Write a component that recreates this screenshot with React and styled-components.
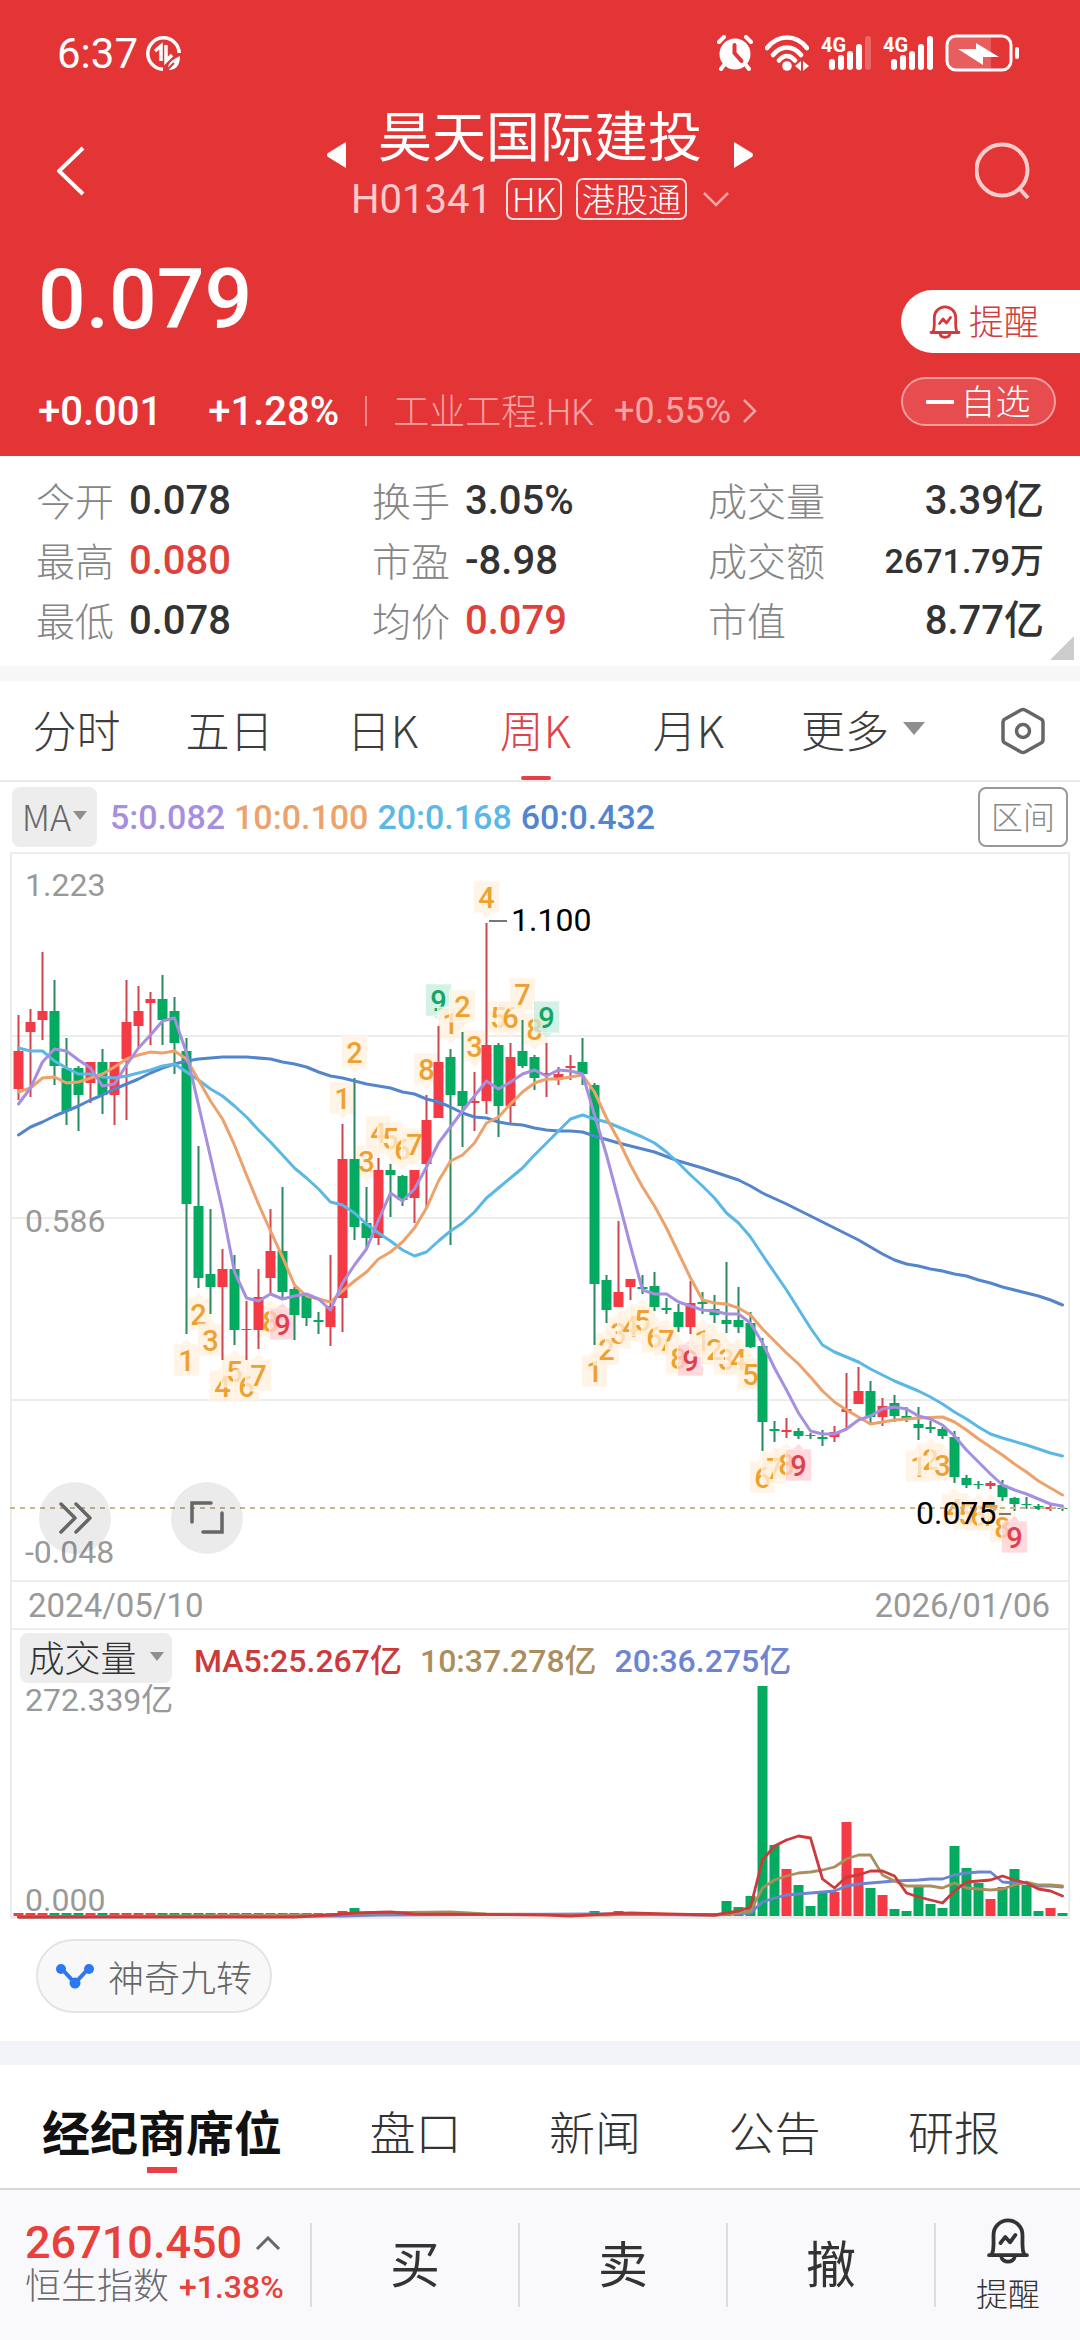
import React, { useState } from "react";
import styled, { createGlobalStyle } from "styled-components";

const RED = "#e33536";
const UP = "#f43a44";
const DOWN = "#03aa5f";
const CJK = `"Noto Sans CJK SC", sans-serif`;
const NUM = `Roboto, "Noto Sans CJK SC", sans-serif`;

const GlobalStyle = createGlobalStyle`
  * {
    box-sizing: border-box;
  }
  body {
    margin: 0;
    background: #fff;
    color: #333;
    font-family: ${CJK};
    font-weight: 300;
  }
  button {
    margin: 0;
    padding: 0;
    border: 0;
    background: none;
    color: inherit;
    font-family: inherit;
    font-weight: inherit;
    cursor: pointer;
  }
  a {
    color: inherit;
    text-decoration: none;
  }
  svg {
    display: block;
    flex: none;
  }
`;

/* ---------------------------- header ---------------------------- */
const Header = styled.header`
  background: ${RED};
  color: #fff;
`;
const StatusBar = styled.div`
  display: flex;
  justify-content: space-between;
  align-items: center;
  height: 106px;
  padding: 0 61px 0 57px;
  font-family: ${NUM};
  font-size: 42px;
  font-weight: 400;
`;
const StatusGroup = styled.div`
  display: flex;
  align-items: center;
  gap: ${(p) => p.$gap}px;
`;
const NavBar = styled.nav`
  display: grid;
  grid-template-columns: 1fr auto 1fr;
  align-items: center;
  height: 130px;
  padding: 0 49px;
`;
const IconButton = styled.button`
  justify-self: ${(p) => p.$side};
  margin: 0 ${(p) => p.$inset || 0}px;
`;
const TitleBox = styled.div`
  display: flex;
  flex-direction: column;
  align-items: center;
  gap: 8px;
  height: 130px;
`;
const TitleRow = styled.div`
  display: flex;
  align-items: flex-end;
  gap: 32px;
  h1 {
    margin: 0;
    padding-bottom: 8px;
    font-size: 54px;
    line-height: 56px;
    font-weight: 400;
  }
`;
const CodeRow = styled.div`
  display: flex;
  align-items: center;
  gap: 14px;
  height: 42px;
  font-size: 40px;
`;
const Code = styled.span`
  font-family: ${NUM};
  font-weight: 400;
  color: #fbc9c9;
`;
const Tag = styled.span`
  height: 42px;
  padding: 0 4px;
  border: 2px solid #fbdcdc;
  border-radius: 7px;
  font-size: 33px;
  line-height: 36px;
`;
const Quote = styled.section`
  display: flex;
  justify-content: space-between;
  padding: 22px 0 20px 38px;
`;
const Price = styled.div`
  font-family: ${NUM};
  font-size: 84px;
  font-weight: 500;
  line-height: 84px;
`;
const ChangeRow = styled.div`
  display: flex;
  align-items: center;
  height: 50px;
  margin-top: 44px;
  font-family: ${NUM};
  font-size: 40px;
  font-weight: 500;
  gap: 26px;
`;
const Changes = styled.div`
  display: flex;
  gap: 46px;
`;
const Split = styled.i`
  width: 2px;
  height: 30px;
  background: #f08686;
`;
const Industry = styled.a`
  display: flex;
  align-items: center;
  gap: 12px;
  color: #f5a3a3;
  font-size: 36px;
  font-weight: 400;
`;
const IndustryName = styled.span`
  padding: 0 8px 4px 0;
  font-weight: 300;
`;
const QuoteActions = styled.div`
  display: flex;
  flex-direction: column;
  align-items: flex-end;
  gap: 24px;
  padding-top: 32px;
`;
const RemindPill = styled.button`
  display: flex;
  align-items: center;
  gap: 8px;
  width: 179px;
  height: 63px;
  padding-left: 28px;
  border-radius: 32px 0 0 32px;
  background: #fff;
  color: #d23a3d;
  font-size: 35px;
  line-height: 40px;
  span {
    padding-bottom: 4px;
  }
`;
const WatchPill = styled.button`
  display: flex;
  align-items: center;
  justify-content: center;
  gap: 6px;
  width: 155px;
  height: 49px;
  margin-right: 24px;
  border: 2px solid #f29c9c;
  border-radius: 25px;
  background: #e74c4e;
  font-size: 35px;
  line-height: 40px;
  span {
    padding-bottom: 4px;
  }
`;

/* ---------------------------- stats ---------------------------- */
const Stats = styled.section`
  position: relative;
  display: grid;
  grid-template-columns: repeat(3, 1fr);
  padding: 15px 36px;
  border-bottom: 15px solid #f7f7f7;
`;
const Stat = styled.div`
  display: flex;
  align-items: center;
  justify-content: ${(p) => (p.$spread ? "space-between" : "flex-start")};
  gap: 15px;
  height: 60px;
`;
const StatLabel = styled.span`
  padding-bottom: 4px;
  color: #858585;
  font-size: 39px;
  line-height: 48px;
`;
const StatValue = styled.span`
  color: ${(p) => (p.$red ? "#e0403c" : "#333")};
  font-family: ${NUM};
  font-size: ${(p) => (p.$small ? 34 : 40)}px;
  font-weight: 500;
  line-height: 48px;
`;
const Corner = styled.i`
  position: absolute;
  right: 6px;
  bottom: 6px;
  border: 12px solid #ccc;
  border-top-color: transparent;
  border-left-color: transparent;
`;

/* ---------------------------- period tabs ---------------------------- */
const Periods = styled.nav`
  display: grid;
  grid-template-columns: repeat(6, 154fr) 156fr;
  align-items: center;
  height: 101px;
  border-bottom: 2px solid #e8e8e8;
`;
const Period = styled.button`
  position: relative;
  display: flex;
  align-items: center;
  justify-content: center;
  gap: 14px;
  height: 99px;
  padding-bottom: 4px;
  color: ${(p) => (p.$active ? "#e2414a" : "#3d3d3d")};
  font-size: 44px;
  white-space: nowrap;
  &::after {
    content: "";
    position: absolute;
    left: calc(50% - 15px);
    bottom: 0;
    width: 30px;
    height: 4px;
    border-radius: 2px;
    background: ${(p) => (p.$active ? "#e2414a" : "transparent")};
  }
`;
const MorePeriods = styled(Period)`
  padding-left: 36px;
`;
const Caret = styled.i`
  border-left: ${(p) => p.$size}px solid transparent;
  border-right: ${(p) => p.$size}px solid transparent;
  border-top: ${(p) => p.$size + 2}px solid #8f8f8f;
`;

/* ---------------------------- chart ---------------------------- */
const MaRow = styled.div`
  display: flex;
  align-items: center;
  height: 70px;
  padding: 0 12px;
`;
const IndicatorButton = styled.button`
  display: flex;
  align-items: center;
  justify-content: center;
  gap: ${(p) => p.$gap}px;
  width: ${(p) => p.$width}px;
  height: ${(p) => p.$height}px;
  padding-bottom: 4px;
  border-radius: 8px;
  background: #ededed;
  color: ${(p) => p.$color};
  font-size: 36px;
  line-height: 44px;
`;
const Legend = styled.div`
  display: flex;
  flex: 1;
  gap: ${(p) => p.$gap}px;
  margin-left: ${(p) => p.$left}px;
  font-family: ${NUM};
  font-size: ${(p) => p.$size}px;
  font-weight: 500;
  white-space: nowrap;
`;
const LegendItem = styled.span`
  color: ${(p) => p.$color};
`;
const RangeButton = styled.button`
  width: 90px;
  height: 60px;
  border: 2px solid #999;
  border-radius: 8px;
  color: #888;
  font-size: 32px;
  line-height: 52px;
  padding-bottom: 4px;
`;
const Frame = styled.section`
  position: relative;
  margin: 0 10px;
  border: 2px solid #ececec;
  border-bottom-width: 3px;
`;
const Plot = styled.svg`
  width: 100%;
  height: auto;
  overflow: visible;
  font-family: ${NUM};
  font-size: 32px;
  font-weight: 400;
`;
const FloatButton = styled.button`
  position: absolute;
  left: ${(p) => p.$left}px;
  top: 628px;
  display: flex;
  align-items: center;
  justify-content: center;
  width: 72px;
  height: 72px;
  border-radius: 50%;
  background: rgba(0, 0, 0, 0.08);
`;
const Dates = styled.div`
  display: flex;
  justify-content: space-between;
  align-items: center;
  height: 50px;
  padding: 0 18px 0 16px;
  border-top: 2px solid #ececec;
  border-bottom: 2px solid #ececec;
  color: #999;
  font-family: ${NUM};
  font-size: 33px;
  font-weight: 400;
`;
const VolumeRow = styled.div`
  display: flex;
  align-items: center;
  height: 56px;
  padding-left: 8px;
`;
const ToolRow = styled.div`
  padding: 20px 36px 28px;
  border-bottom: 24px solid #f3f4f9;
`;
const ToolPill = styled.button`
  display: flex;
  align-items: center;
  gap: 14px;
  height: 74px;
  padding: 0 18px;
  border: 2px solid #e4e4e4;
  border-radius: 37px;
  background: #f8f8f8;
  color: #666;
  font-size: 36px;
`;

/* ---------------------------- bottom ---------------------------- */
const InfoTabs = styled.nav`
  display: flex;
  justify-content: space-between;
  align-items: center;
  height: 125px;
  padding: 6px 80px 0 42px;
  border-bottom: 2px solid #d8d8d8;
`;
const InfoTab = styled.button`
  position: relative;
  color: ${(p) => (p.$active ? "#111" : "#333")};
  font-size: ${(p) => (p.$active ? 48 : 46)}px;
  font-weight: ${(p) => (p.$active ? 700 : 300)};
  line-height: 64px;
  &::after {
    content: "";
    position: absolute;
    left: calc(50% - 15px);
    bottom: -11px;
    width: 30px;
    height: 6px;
    background: ${(p) => (p.$active ? "#ea3d46" : "transparent")};
  }
`;
const Footer = styled.footer`
  display: grid;
  grid-template-columns: 310fr 208fr 208fr 208fr 146fr;
  align-items: center;
  height: 150px;
  background: #f9f9fc;
`;
const FooterCell = styled.button`
  height: 84px;
  padding-bottom: 8px;
  border-left: 2px solid #dcdce0;
  color: #333;
  font-size: 50px;
  font-weight: 400;
  line-height: 60px;
`;
const FooterRemind = styled(FooterCell)`
  display: flex;
  flex-direction: column;
  align-items: center;
  justify-content: center;
  gap: 8px;
  padding: 0;
  font-size: 32px;
  font-weight: 300;
  line-height: 40px;
`;
const IndexBox = styled.div`
  padding-left: 25px;
  color: #e8403a;
  font-family: ${NUM};
  white-space: nowrap;
`;
const IndexValue = styled.div`
  display: flex;
  align-items: center;
  gap: 13px;
  font-size: 45px;
  font-weight: 500;
  line-height: 44px;
`;
const IndexName = styled.div`
  display: flex;
  align-items: center;
  gap: 10px;
  font-size: 32px;
  font-weight: 500;
  line-height: 44px;
  span {
    color: #6a6a6e;
    font-size: 36px;
    font-weight: 300;
  }
`;

/* ---------------------------- data ---------------------------- */
// direction, high, body top, body bottom, low
const candles = [
  ["r", 1015, 1051, 1089, 1100], ["r", 1009, 1022, 1032, 1097], ["r", 952, 1011, 1020, 1040],
  ["g", 980, 1011, 1066, 1085], ["g", 1038, 1068, 1111, 1125], ["g", 1066, 1068, 1095, 1131],
  ["r", 1062, 1062, 1083, 1103], ["g", 1049, 1062, 1095, 1114], ["r", 1062, 1062, 1095, 1125],
  ["r", 980, 1022, 1059, 1120], ["r", 986, 1011, 1026, 1047], ["r", 992, 999, 1003, 1045],
  ["g", 975, 999, 1020, 1045], ["g", 997, 1011, 1043, 1074], ["g", 1038, 1051, 1204, 1334],
  ["g", 1146, 1206, 1278, 1288], ["g", 1209, 1274, 1287, 1314], ["r", 1249, 1269, 1287, 1360],
  ["g", 1255, 1269, 1330, 1345], ["r", 1301, 1329, 1330, 1360], ["r", 1269, 1297, 1330, 1349],
  ["r", 1209, 1251, 1278, 1295], ["g", 1187, 1251, 1292, 1298], ["g", 1287, 1289, 1315, 1340],
  ["g", 1293, 1295, 1318, 1326], ["g", 1312, 1320, 1322, 1334], ["r", 1255, 1306, 1327, 1346],
  ["r", 1124, 1159, 1298, 1332], ["g", 1078, 1159, 1227, 1240], ["g", 1187, 1223, 1238, 1248],
  ["r", 1158, 1170, 1238, 1245], ["g", 1164, 1170, 1175, 1217], ["g", 1175, 1176, 1200, 1206],
  ["r", 1170, 1170, 1198, 1223], ["r", 1095, 1120, 1164, 1207], ["r", 1026, 1062, 1118, 1118],
  ["g", 1049, 1057, 1095, 1245], ["g", 1032, 1091, 1106, 1147], ["r", 1072, 1101, 1103, 1131],
  ["r", 923, 1045, 1101, 1114], ["g", 1043, 1045, 1106, 1137], ["r", 1043, 1057, 1106, 1123],
  ["g", 1020, 1051, 1066, 1068], ["g", 1055, 1057, 1078, 1090], ["r", 1043, 1073, 1075, 1097],
  ["r", 1067, 1074, 1079, 1085], ["r", 1055, 1066, 1068, 1080], ["g", 1038, 1062, 1074, 1085],
  ["g", 1083, 1085, 1284, 1345], ["g", 1275, 1280, 1310, 1323], ["r", 1221, 1292, 1307, 1307],
  ["r", 1279, 1279, 1287, 1300], ["g", 1275, 1287, 1289, 1294], ["g", 1272, 1286, 1307, 1311],
  ["g", 1298, 1308, 1310, 1314], ["g", 1304, 1312, 1327, 1332], ["r", 1281, 1303, 1327, 1334],
  ["g", 1292, 1302, 1304, 1314], ["g", 1295, 1309, 1315, 1323], ["g", 1262, 1320, 1324, 1333],
  ["g", 1287, 1320, 1327, 1333], ["g", 1312, 1323, 1347, 1348], ["g", 1338, 1346, 1422, 1451],
  ["g", 1421, 1429, 1431, 1442], ["r", 1418, 1430, 1432, 1438], ["g", 1428, 1431, 1436, 1439],
  ["g", 1433, 1435, 1436, 1439], ["g", 1430, 1437, 1439, 1446], ["r", 1426, 1432, 1437, 1442],
  ["r", 1373, 1409, 1412, 1429], ["r", 1367, 1391, 1404, 1404], ["g", 1381, 1391, 1417, 1423],
  ["r", 1398, 1406, 1417, 1426], ["g", 1395, 1403, 1416, 1422], ["g", 1407, 1416, 1418, 1422],
  ["g", 1407, 1424, 1428, 1440], ["g", 1421, 1427, 1429, 1433], ["g", 1427, 1429, 1436, 1439],
  ["g", 1431, 1437, 1477, 1483], ["g", 1475, 1478, 1485, 1488], ["g", 1481, 1484, 1485, 1489],
  ["r", 1481, 1483, 1486, 1489], ["g", 1480, 1485, 1497, 1501], ["g", 1497, 1498, 1504, 1511],
  ["g", 1497, 1504, 1505, 1509], ["g", 1504, 1506, 1509, 1510], ["r", 1505, 1507, 1509, 1511],
  ["g", 1507, 1508, 1509, 1511],
];

// tops of the volume bars, every other bar is a sliver
const volumeTops = {
  27: 1911, 28: 1908, 48: 1911, 50: 1911, 59: 1901, 60: 1907, 61: 1896, 62: 1686, 63: 1845,
  64: 1869, 65: 1885, 66: 1906, 67: 1893, 68: 1892, 69: 1822, 70: 1868, 71: 1888, 72: 1895,
  73: 1909, 74: 1911, 75: 1887, 76: 1904, 77: 1908, 78: 1846, 79: 1868, 80: 1883, 81: 1899,
  82: 1887, 83: 1869, 84: 1885, 85: 1911, 86: 1908, 87: 1913,
};

const priceLines = [
  {
    color: "#5385cc",
    points: [
      [0, 1135], [1, 1127], [2, 1122], [3, 1116], [4, 1111], [5, 1106], [6, 1100], [7, 1095],
      [8, 1089], [9, 1084], [10, 1079], [11, 1073], [12, 1068], [13, 1064], [14, 1061],
      [15, 1059], [16, 1058], [17, 1057], [19, 1057], [21, 1059], [22, 1062], [23, 1064],
      [24, 1067], [25, 1072], [26, 1076], [27, 1078], [28, 1081], [29, 1084], [31, 1088],
      [32, 1092], [33, 1094], [34, 1099], [35, 1102], [36, 1107], [37, 1113], [38, 1117],
      [39, 1118], [40, 1122], [41, 1124], [42, 1125], [43, 1128], [44, 1130], [45, 1131],
      [46, 1131], [47, 1132], [48, 1136], [50, 1143], [53, 1152], [55, 1161], [57, 1168],
      [58, 1172], [59, 1176], [60, 1180], [61, 1186], [62, 1193], [64, 1204], [66, 1216],
      [68, 1228], [70, 1240], [71, 1247], [72, 1254], [73, 1260], [74, 1264], [75, 1266],
      [76, 1269], [77, 1271], [78, 1274], [79, 1276], [80, 1280], [81, 1283], [82, 1287],
      [84, 1293], [85, 1296], [86, 1300], [87, 1305],
    ],
  },
  {
    color: "#5bb8e6",
    points: [
      [0, 1048], [1, 1051], [2, 1051], [3, 1061], [4, 1068], [5, 1074], [6, 1074], [7, 1077],
      [8, 1078], [9, 1076], [10, 1073], [11, 1070], [12, 1066], [13, 1064], [14, 1072],
      [15, 1080], [16, 1089], [17, 1096], [18, 1106], [19, 1117], [20, 1130], [21, 1142],
      [22, 1155], [23, 1168], [24, 1178], [25, 1189], [26, 1202], [27, 1205], [28, 1213],
      [29, 1224], [30, 1233], [31, 1241], [32, 1250], [33, 1256], [34, 1252], [35, 1241],
      [36, 1231], [37, 1223], [38, 1212], [39, 1198], [40, 1188], [41, 1178], [42, 1168],
      [43, 1155], [44, 1143], [45, 1131], [46, 1119], [47, 1115], [48, 1119], [49, 1122],
      [50, 1127], [51, 1132], [52, 1137], [53, 1143], [54, 1152], [55, 1163], [56, 1175],
      [57, 1186], [58, 1198], [59, 1213], [60, 1223], [61, 1237], [62, 1255], [64, 1290],
      [66, 1328], [67, 1345], [68, 1352], [69, 1357], [70, 1362], [71, 1369], [73, 1381],
      [75, 1391], [76, 1397], [77, 1404], [78, 1412], [79, 1419], [80, 1427], [81, 1434],
      [82, 1438], [84, 1445], [85, 1449], [86, 1453], [87, 1456],
    ],
  },
  {
    color: "#eda26b",
    points: [
      [0, 1092], [1, 1088], [2, 1078], [3, 1077], [4, 1083], [5, 1082], [6, 1078], [7, 1074],
      [8, 1067], [9, 1059], [10, 1055], [11, 1052], [12, 1053], [13, 1051], [14, 1059],
      [15, 1080], [16, 1101], [17, 1119], [18, 1145], [19, 1175], [20, 1204], [21, 1231],
      [22, 1257], [23, 1285], [24, 1296], [25, 1299], [26, 1302], [27, 1291], [28, 1281],
      [29, 1272], [30, 1259], [31, 1252], [32, 1242], [33, 1228], [34, 1208], [35, 1181],
      [36, 1161], [37, 1155], [38, 1143], [39, 1123], [40, 1117], [41, 1104], [42, 1092],
      [43, 1083], [44, 1079], [45, 1079], [46, 1077], [47, 1075], [48, 1092], [49, 1118],
      [50, 1140], [51, 1165], [52, 1187], [53, 1206], [54, 1228], [56, 1278], [57, 1300],
      [58, 1303], [59, 1304], [60, 1308], [61, 1315], [62, 1329], [63, 1341], [64, 1353],
      [65, 1364], [66, 1377], [67, 1391], [68, 1402], [69, 1410], [70, 1417], [71, 1424],
      [72, 1422], [73, 1420], [74, 1419], [75, 1418], [77, 1417], [78, 1422], [79, 1430],
      [80, 1439], [81, 1447], [82, 1455], [83, 1464], [84, 1472], [85, 1481], [86, 1488],
      [87, 1495],
    ],
  },
  {
    color: "#a68ee0",
    points: [
      [0, 1104], [1, 1088], [2, 1062], [3, 1049], [4, 1051], [5, 1060], [6, 1068], [7, 1086],
      [8, 1084], [9, 1065], [10, 1048], [11, 1035], [12, 1021], [13, 1018], [14, 1053],
      [15, 1105], [16, 1157], [17, 1210], [18, 1272], [19, 1298], [20, 1301], [21, 1294],
      [22, 1299], [23, 1296], [24, 1294], [25, 1299], [26, 1310], [27, 1283], [28, 1265],
      [29, 1249], [30, 1220], [31, 1193], [32, 1201], [33, 1189], [34, 1167], [35, 1143],
      [36, 1127], [37, 1111], [38, 1096], [39, 1081], [40, 1089], [41, 1082], [42, 1074],
      [43, 1070], [44, 1076], [45, 1070], [46, 1071], [47, 1074], [48, 1115], [49, 1155],
      [50, 1200], [51, 1246], [52, 1290], [53, 1294], [54, 1294], [55, 1302], [56, 1306],
      [57, 1310], [58, 1311], [59, 1314], [60, 1314], [61, 1323], [62, 1343], [63, 1368],
      [64, 1390], [65, 1413], [66, 1431], [67, 1434], [68, 1434], [69, 1429], [70, 1420],
      [71, 1416], [72, 1409], [73, 1407], [74, 1409], [75, 1416], [76, 1419], [77, 1425],
      [78, 1436], [79, 1450], [80, 1462], [81, 1474], [82, 1485], [83, 1490], [84, 1494],
      [85, 1499], [86, 1504], [87, 1506],
    ],
  },
];

const volumeLines = [
  {
    color: "#6c84d2",
    points: [
      [0, 1917], [27, 1916], [30, 1915], [48, 1914], [58, 1915], [61, 1913], [62, 1902],
      [63, 1898], [64, 1895], [65, 1894], [66, 1893], [67, 1892], [68, 1891], [69, 1886],
      [70, 1884], [71, 1883], [72, 1882], [73, 1881], [75, 1880], [76, 1879], [77, 1879],
      [78, 1875], [79, 1873], [80, 1872], [81, 1872], [82, 1882], [83, 1883], [84, 1883],
      [85, 1886], [86, 1886], [87, 1887],
    ],
  },
  {
    color: "#ab8e5e",
    points: [
      [0, 1917], [26, 1915], [29, 1913], [36, 1912], [39, 1914], [49, 1915], [51, 1914],
      [58, 1915], [60, 1913], [61, 1911], [62, 1888], [63, 1880], [64, 1876], [65, 1873],
      [66, 1872], [67, 1870], [68, 1867], [69, 1859], [70, 1855], [71, 1855], [72, 1875],
      [73, 1881], [74, 1886], [76, 1886], [77, 1888], [78, 1883], [79, 1888], [80, 1889],
      [81, 1890], [82, 1889], [83, 1885], [84, 1882], [85, 1885], [86, 1885], [87, 1886],
    ],
  },
  {
    color: "#cc3a3c",
    points: [
      [0, 1917], [23, 1917], [26, 1915], [28, 1913], [31, 1912], [33, 1914], [44, 1915],
      [46, 1916], [49, 1914], [51, 1913], [54, 1914], [58, 1915], [59, 1913], [60, 1911],
      [61, 1907], [62, 1860], [63, 1846], [64, 1840], [65, 1836], [66, 1838], [67, 1879],
      [68, 1888], [69, 1877], [70, 1875], [71, 1871], [72, 1871], [73, 1876], [74, 1893],
      [75, 1897], [76, 1900], [77, 1903], [78, 1891], [79, 1882], [80, 1881], [81, 1880],
      [82, 1876], [83, 1880], [84, 1883], [85, 1889], [86, 1891], [87, 1896],
    ],
  },
];

// runs of nine counted weeks: index of the first one and the side they sit on
const runs = [
  { start: 14, above: false },
  { start: 27, above: true },
  { start: 36, above: true },
  { start: 48, above: false },
  { start: 57, above: false },
  { start: 75, above: false },
];

const stats = [
  ["今开", "0.078"], ["换手", "3.05%"], ["成交量", "3.39亿"],
  ["最高", "0.080", "red"], ["市盈", "-8.98"], ["成交额", "2671.79万"],
  ["最低", "0.078"], ["均价", "0.079", "red"], ["市值", "8.77亿"],
];

const xOf = (i) => 18.5 + 12 * i;
const toPoints = (points) => points.map(([i, y]) => `${xOf(i)},${y}`).join(" ");

/* ---------------------------- icons ---------------------------- */
const BellIcon = ({ size, stroke }) => (
  <svg width={size} height={size + 2} viewBox="0 0 32 34" fill="none" stroke="currentColor" strokeWidth={stroke} strokeLinecap="round" strokeLinejoin="round">
    <path d="M2 27.5h28M4 27c1-2 1.300-4 1.300-7v-7.500a10.700 10.700 0 0 1 21.400 0V20c0 3 .3 5 1.300 7" />
    <path d="M11 28.500c.8 5 9.200 5 10 0" />
    <path d="M10.500 18.500l3.500-4.500 3.500 4 4-5.500" />
  </svg>
);

const Signal = ({ weak }) => (
  <svg width="50" height="36" viewBox="0 0 50 36" fill="#fff">
    <text x="0" y="17" fontSize="20" fontWeight="700">4G</text>
    <rect x="8" y="24" width="6" height="11" rx="3" />
    <rect x="17" y="20" width="6" height="15" rx="3" />
    <rect x="26" y="16" width="6" height="19" rx="3" />
    <rect x="35" y="9" width="6" height="26" rx="3" />
    <rect x="44" y="1" width="6" height="34" rx="3" opacity={weak ? 0.25 : 1} />
  </svg>
);

const StatusIcons = () => (
  <StatusGroup $gap={12}>
    <svg width="36" height="36" viewBox="0 0 36 36" fill="none" stroke="#fff" strokeWidth="4" strokeLinecap="round">
      <circle cx="18" cy="19" r="15.500" fill="#fff" stroke="none" />
      <path d="M2 7l5-5M34 7l-5-5M7 30l-3 4M29 30l3 4" />
      <path d="M17.500 10v8l7 8" stroke={RED} />
    </svg>
    <svg width="44" height="36" viewBox="0 0 44 36" fill="none" stroke="#fff" strokeWidth="4.500" strokeLinecap="round">
      <path d="M2 13c11-14 29-14 40 0M8 20c8-10 20-10 28 0M14 25.500c5-6 11-6 16 0" />
      <circle cx="22" cy="31" r="4.800" fill="#fff" stroke="none" />
      <path d="M36 26v10l-6-5zM38 26v10l6-5z" fill="#fff" stroke="none" />
    </svg>
    <Signal weak />
    <Signal />
    <svg width="74" height="38" viewBox="0 0 74 38" fill="none">
      <path d="M11 2H46V36H11a9 9 0 0 1-9-9V11a9 9 0 0 1 9-9z" fill="#fff" opacity="0.2" />
      <rect x="2" y="2" width="64" height="34" rx="9" stroke="#fff" strokeWidth="3" />
      <rect x="70" y="13" width="4" height="12" rx="2" fill="#fff" />
      <path d="M13 15h18V9l23 14H38v8z" fill="#fff" />
    </svg>
  </StatusGroup>
);

const DataSaverIcon = () => (
  <svg width="35" height="35" viewBox="0 0 35 35" fill="none" stroke="#fff" strokeWidth="3.500">
    <path d="M17 33.200A15.700 15.700 0 1 1 33.200 17" />
    <path d="M9 15l6-5v15M20 9v16l6-6" strokeWidth="3.500" />
    <path d="M34 20c0 9-4 14-11 14-3-6 3-10 11-14z" fill="#fff" stroke="none" />
    <path d="M20 35l8-8" strokeWidth="2" stroke={RED} />
  </svg>
);

/* ---------------------------- parts ---------------------------- */
const Markers = ({ run }) => (
  <g fontSize="29" fontWeight="500" textAnchor="middle">
    {candles.slice(run.start, run.start + 9).map(([, high, , , low], n) => {
      const x = xOf(run.start + n);
      const top = run.above ? high - 42 : low + 10;
      const last = n === 8;
      const fill = last ? (run.above ? "#c4ecdc" : "#ffcfd5") : "#fff0dd";
      const color = last ? (run.above ? "#12a565" : "#e0404e") : "#eea12f";
      const tip = run.above
        ? `M${x - 5} ${top + 32}h10l-5 5z`
        : `M${x - 5} ${top}h10l-5 -5z`;
      return (
        <g key={n}>
          <rect x={x - 13} y={top} width="26" height="32" rx="1" fill={fill} fillOpacity="0.75" stroke="#fff" strokeOpacity="0.7" />
          <path d={tip} fill={fill} fillOpacity="0.75" />
          <text x={x} y={top + 27} fill={color}>{n + 1}</text>
        </g>
      );
    })}
  </g>
);

const PriceChart = () => (
  <Plot viewBox="12 854 1056 726">
    <g stroke="#ececec" strokeWidth="2">
      <path d="M12 1036H1068M12 1218H1068M12 1400H1068" />
    </g>
    {runs.map((run) => (
      <Markers key={run.start} run={run} />
    ))}
    {candles.map(([dir, high, top, bottom, low], i) => {
      const x = xOf(i);
      return (
        <g key={i}>
          <rect x={x - 1} y={high} width="2" height={low - high} fill={dir === "r" ? "#cf4550" : "#2b8a60"} />
          <rect x={x - 5} y={top} width="10" height={bottom - top} fill={dir === "r" ? UP : DOWN} />
        </g>
      );
    })}
    <g fill="none" strokeWidth="3" strokeLinecap="round" strokeLinejoin="round">
      {priceLines.map((line) => (
        <polyline key={line.color} points={toPoints(line.points)} stroke={line.color} />
      ))}
    </g>
    <path d="M10 1508H1068" stroke="#c9b695" strokeWidth="2" strokeDasharray="5 5" />
    <path d="M489 921h18M999 1514h12" stroke="#777" strokeWidth="2" />
    <text x="511" y="931">1.100</text>
    <text x="916" y="1524">0.075</text>
    <g fill="#999">
      <text x="25" y="896">1.223</text>
      <text x="25" y="1232">0.586</text>
      <text x="25" y="1563">-0.048</text>
    </g>
  </Plot>
);

const VolumeChart = () => (
  <Plot viewBox="12 1686 1056 230">
    <g fill="#999">
      <text x="25" y="1711">272.339亿</text>
      <text x="25" y="1911">0.000</text>
    </g>
    {candles.map(([dir], i) => {
      const top = volumeTops[i] || 1913;
      return <rect key={i} x={xOf(i) - 5} y={top} width="10" height={1916 - top} fill={dir === "r" ? UP : DOWN} />;
    })}
    <g fill="none" strokeWidth="2.800" strokeLinecap="round" strokeLinejoin="round">
      {volumeLines.map((line) => (
        <polyline key={line.color} points={toPoints(line.points)} stroke={line.color} />
      ))}
    </g>
  </Plot>
);

const App = () => {
  const [period, setPeriod] = useState("周K");
  const [tab, setTab] = useState("经纪商席位");

  return (
    <>
      <GlobalStyle />
      <Header>
        <StatusBar>
          <StatusGroup $gap={8}>
            <span>6:37</span>
            <DataSaverIcon />
          </StatusGroup>
          <StatusIcons />
        </StatusBar>
        <NavBar>
          <IconButton $side="start" $inset={8} aria-label="返回">
            <svg width="30" height="50" viewBox="2 0 30 50" fill="none" stroke="#fff" strokeWidth="4">
              <path d="M28 2L4 25l24 23" />
            </svg>
          </IconButton>
          <TitleBox>
            <TitleRow>
              <svg width="19" height="30" viewBox="0 0 19 30" fill="#fff">
                <path d="M19 2v26L1 17q-2-2 0-4z" />
              </svg>
              <h1>昊天国际建投</h1>
              <svg width="19" height="30" viewBox="0 0 19 30" fill="#fff">
                <path d="M0 2v26L18 17q2-2 0-4z" />
              </svg>
            </TitleRow>
            <CodeRow>
              <Code>H01341</Code>
              <Tag>HK</Tag>
              <Tag>港股通</Tag>
              <svg width="28" height="18" viewBox="0 0 28 18" fill="none" stroke="#f5a3a3" strokeWidth="2.500">
                <path d="M3 3l12 12L27 3" />
              </svg>
            </CodeRow>
          </TitleBox>
          <IconButton $side="end" aria-label="搜索">
            <svg width="56" height="60" viewBox="2 0 56 60" fill="none" stroke="#f8cccc" strokeWidth="4">
              <circle cx="29" cy="29" r="25.500" />
              <path d="M46 47l9 10" />
            </svg>
          </IconButton>
        </NavBar>
        <Quote>
          <div>
            <Price>0.079</Price>
            <ChangeRow>
              <Changes>
                <span>+0.001</span>
                <span>+1.28%</span>
              </Changes>
              <Split />
              <Industry href="#industry">
                <IndustryName>工业工程.HK</IndustryName>
                <span>+0.55%</span>
                <svg width="14" height="26" viewBox="0 0 14 26" fill="none" stroke="currentColor" strokeWidth="2.500">
                  <path d="M1 2l11 11L1 24" />
                </svg>
              </Industry>
            </ChangeRow>
          </div>
          <QuoteActions>
            <RemindPill>
              <BellIcon size={32} stroke={2.8} />
              <span>提醒</span>
            </RemindPill>
            <WatchPill>
              <svg width="28" height="4" viewBox="0 0 28 4">
                <rect width="28" height="4" rx="1" fill="#fff" />
              </svg>
              <span>自选</span>
            </WatchPill>
          </QuoteActions>
        </Quote>
      </Header>

      <Stats>
        {stats.map(([label, value, red], index) => (
          <Stat key={label} $spread={index % 3 === 2}>
            <StatLabel>{label}</StatLabel>
            <StatValue $red={red} $small={value.length > 7}>{value}</StatValue>
          </Stat>
        ))}
        <Corner />
      </Stats>

      <Periods>
        {["分时", "五日", "日K", "周K", "月K"].map((item) => (
          <Period key={item} $active={item === period} onClick={() => setPeriod(item)}>
            {item}
          </Period>
        ))}
        <MorePeriods>
          更多
          <Caret $size={11} />
        </MorePeriods>
        <IconButton $side="end" $inset={35} aria-label="设置">
          <svg width="44" height="48" viewBox="0 0 44 48" fill="none" stroke="#666" strokeWidth="3.500" strokeLinejoin="round">
            <path d="M20 3q2-1 4 0l16 9q2 1 2 3.500v17q0 2.500-2 3.500l-16 9q-2 1-4 0l-16-9q-2-1-2-3.500v-17q0-2.500 2-3.500z" />
            <circle cx="22" cy="24" r="6.500" />
          </svg>
        </IconButton>
      </Periods>

      <MaRow>
        <IndicatorButton $width={85} $height={60} $gap={2} $color="#666">
          MA
          <Caret $size={7} />
        </IndicatorButton>
        <Legend $left={13} $gap={9} $size={34}>
          <LegendItem $color="#a68ee0">5:0.082</LegendItem>
          <LegendItem $color="#eda26b">10:0.100</LegendItem>
          <LegendItem $color="#5bb8e6">20:0.168</LegendItem>
          <LegendItem $color="#5385cc">60:0.432</LegendItem>
        </Legend>
        <RangeButton>区间</RangeButton>
      </MaRow>
      <Frame>
        <PriceChart />
        <FloatButton $left={27} aria-label="展开">
          <svg width="34" height="32" viewBox="0 0 34 32" fill="none" stroke="#666" strokeWidth="3.500" strokeLinecap="round" strokeLinejoin="round">
            <path d="M3 2l14 14L3 30M18 2l14 14-14 14" />
          </svg>
        </FloatButton>
        <FloatButton $left={159} aria-label="全屏">
          <svg width="34" height="34" viewBox="0 0 34 34" fill="none" stroke="#666" strokeWidth="3.500" strokeLinecap="round">
            <path d="M2 21V2h19M13 31h19V12" />
          </svg>
        </FloatButton>
        <Dates>
          <span>2024/05/10</span>
          <span>2026/01/06</span>
        </Dates>
        <VolumeRow>
          <IndicatorButton $width={152} $height={50} $gap={13} $color="#333">
            成交量
            <Caret $size={7} />
          </IndicatorButton>
          <Legend $left={22} $gap={18} $size={32}>
            <LegendItem $color="#cc3a3c">MA5:25.267亿</LegendItem>
            <LegendItem $color="#ab8e5e">10:37.278亿</LegendItem>
            <LegendItem $color="#6c84d2">20:36.275亿</LegendItem>
          </Legend>
        </VolumeRow>
        <VolumeChart />
      </Frame>

      <ToolRow>
        <ToolPill>
          <svg width="38" height="26" viewBox="0 0 38 26" fill="none" stroke="#2b78f0" strokeWidth="4">
            <path d="M5 5l14 15L33 5" />
            <g fill="#2b78f0" stroke="none">
              <circle cx="5" cy="6" r="5" />
              <circle cx="19" cy="20" r="5.500" />
              <circle cx="33" cy="6" r="5" />
            </g>
          </svg>
          神奇九转
        </ToolPill>
      </ToolRow>

      <InfoTabs>
        {["经纪商席位", "盘口", "新闻", "公告", "研报"].map((item) => (
          <InfoTab key={item} $active={item === tab} onClick={() => setTab(item)}>
            {item}
          </InfoTab>
        ))}
      </InfoTabs>
      <Footer>
        <IndexBox>
          <IndexValue>
            26710.450
            <svg width="26" height="15" viewBox="0 0 26 15" fill="none" stroke="#666" strokeWidth="3">
              <path d="M2 13L13 2l11 11" />
            </svg>
          </IndexValue>
          <IndexName>
            <span>恒生指数</span>
            +1.38%
          </IndexName>
        </IndexBox>
        <FooterCell>买</FooterCell>
        <FooterCell>卖</FooterCell>
        <FooterCell>撤</FooterCell>
        <FooterRemind>
          <BellIcon size={44} stroke={2.8} />
          提醒
        </FooterRemind>
      </Footer>
    </>
  );
};

export default App;
